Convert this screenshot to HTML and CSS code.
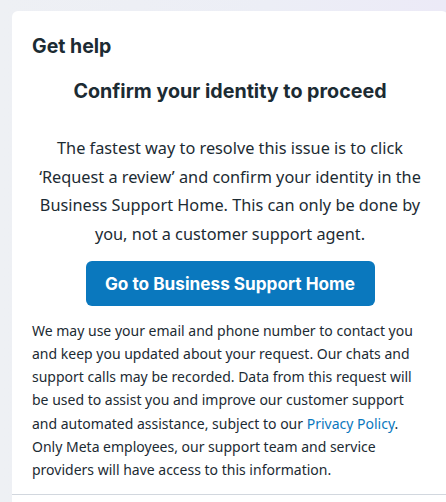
FILE: index.html
```html
<!DOCTYPE html>
<html lang="en">
<head>
<meta charset="utf-8">
<title>Get help</title>
<link rel="stylesheet" href="styles.css">
</head>
<body>
<main class="card">
  <h2 class="card-title">Get help</h2>
  <section class="content">
    <h3 class="heading">Confirm your identity to proceed</h3>
    <p class="lead">The fastest way to resolve this issue is to click ‘Request a review’ and confirm your identity in the Business Support Home. This can only be done by you, not a customer support agent.</p>
    <button class="cta" type="button">Go to Business Support Home</button>
    <p class="note">We may use your email and phone number to contact you and keep you updated about your request. Our chats and support calls may be recorded. Data from this request will be used to assist you and improve our customer support and automated assistance, subject to our <a class="link" href="#">Privacy Policy</a>. Only Meta employees, our support team and service providers will have access to this information.</p>
  </section>
  <div class="divider"></div>
</main>
</body>
</html>
```

FILE: styles.css
```css
html, body {
  margin: 0;
  padding: 0;
  overflow: hidden;
  height: 100%;
}
body {
  background: linear-gradient(90deg, #eef0f4 0%, #eceef6 60%, #eceaf7 100%);
  font-family: "Noto Sans", "Open Sans", sans-serif;
  color: #1c2b33;
}
.card {
  margin: 11px 0 0 12px;
  width: 436px;
  background: #ffffff;
  border-radius: 6px 6px 0 0;
  padding: 0;
  min-height: calc(100vh - 11px);
}
.card-title {
  margin: 0;
  padding: 22px 20px 0 20px;
  font-family: "Inter", sans-serif;
  font-size: 19.5px;
  font-weight: 700;
  line-height: 26px;
  color: #1c2b33;
}
.content {
  padding: 0 20px 13px 20px;
  display: flex;
  flex-direction: column;
  align-items: center;
}
.heading {
  margin: 19px 0 0 0;
  font-family: "Inter", sans-serif;
  font-size: 19.7px;
  font-weight: 700;
  line-height: 26px;
  text-align: center;
  color: #1c2b33;
}
.lead {
  margin: 30px 0 0 0;
  font-size: 16.3px;
  line-height: 28.7px;
  text-align: center;
  color: #1c2b33;
}
.cta {
  margin-top: 12px;
  width: 289px;
  height: 45px;
  border: none;
  border-radius: 6px;
  background: #0a78be;
  color: #ffffff;
  font-family: "Inter", sans-serif;
  font-size: 17.2px;
  font-weight: 700;
  cursor: pointer;
}
.note {
  margin: 13px 0 0 0;
  align-self: stretch;
  font-size: 14px;
  line-height: 23.2px;
  color: #1c2b33;
}
.link {
  color: #0a78be;
  text-decoration: none;
}
.divider {
  border-top: 1px solid #d2d7de;
}
```
